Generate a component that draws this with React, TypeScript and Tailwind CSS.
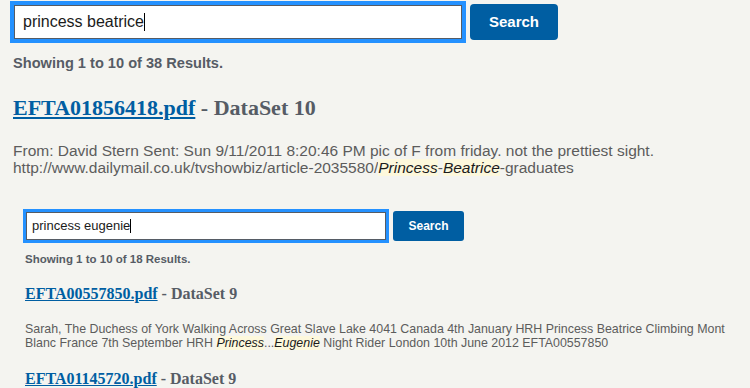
import React from "react";

function Mark({ children }: { children: React.ReactNode }) {
  return <em className="bg-[#fdf8dc] text-[#1b1b1b] italic">{children}</em>;
}

export default function App() {
  return (
    <div className="w-[750px] h-[388px] overflow-hidden bg-[#f4f4f0] font-['Liberation_Sans',Arial,sans-serif]">
      {/* Top (larger) screenshot */}
      <div className="pl-[10px] pt-[1px]">
        <div className="flex items-center gap-[4px]">
          <div className="w-[456px] h-[42px] border-[4px] border-[#2491ff] bg-white flex items-center">
            <div className="w-full h-full border border-[#565c65] flex items-center pl-[8px] text-[16px] text-[#1b1b1b]">
              princess beatrice<span className="w-[1px] h-[18px] bg-black" />
            </div>
          </div>
          <button className="w-[88px] h-[36px] rounded-[4px] bg-[#005ea2] text-white font-bold text-[15px]">
            Search
          </button>
        </div>
        <div className="pl-[3px] mt-[10px] text-[14.6px] font-bold text-[#565c65]">
          Showing 1 to 10 of 38 Results.
        </div>
        <div className="pl-[3px] mt-[16px] font-['Liberation_Serif',serif] text-[22px] font-bold text-[#565c65]">
          <a className="text-[#005ea2] underline">EFTA01856418.pdf</a> - DataSet 10
        </div>
        <div className="pl-[3px] mt-[18px] text-[15.5px] leading-[17px] text-[#5c5c5c]">
          From: David Stern Sent: Sun 9/11/2011 8:20:46 PM pic of F from friday. not the prettiest sight.
          <br />
          http://www.dailymail.co.uk/tvshowbiz/article-2035580/<Mark>Princess</Mark>-<Mark>Beatrice</Mark>-graduates
        </div>
      </div>

      {/* Bottom (smaller) screenshot */}
      <div className="pl-[23px] mt-[33px]">
        <div className="flex items-center gap-[4px]">
          <div className="w-[366px] h-[34px] border-[3px] border-[#2491ff] bg-white">
            <div className="w-full h-full border border-[#565c65] flex items-center pl-[5px] text-[13px] text-[#1b1b1b]">
              princess eugenie<span className="w-[1px] h-[14px] bg-black" />
            </div>
          </div>
          <button className="w-[71px] h-[30px] rounded-[3px] bg-[#005ea2] text-white font-bold text-[12px]">
            Search
          </button>
        </div>
        <div className="pl-[2px] mt-[8px] text-[11.5px] font-bold text-[#565c65]">
          Showing 1 to 10 of 18 Results.
        </div>
        <div className="pl-[2px] mt-[14px] font-['Liberation_Serif',serif] text-[16px] font-bold text-[#565c65]">
          <a className="text-[#005ea2] underline">EFTA00557850.pdf</a> - DataSet 9
        </div>
        <div className="pl-[2px] mt-[16px] text-[12.4px] leading-[14px] text-[#5c5c5c]">
          Sarah, The Duchess of York Walking Across Great Slave Lake 4041 Canada 4th January HRH Princess Beatrice Climbing Mont
          <br />
          Blanc France 7th September HRH <Mark>Princess</Mark>...<Mark>Eugenie</Mark> Night Rider London 10th June 2012 EFTA00557850
        </div>
        <div className="pl-[2px] mt-[17px] font-['Liberation_Serif',serif] text-[16px] font-bold text-[#565c65]">
          <a className="text-[#005ea2] underline">EFTA01145720.pdf</a> - DataSet 9
        </div>
      </div>
    </div>
  );
}
